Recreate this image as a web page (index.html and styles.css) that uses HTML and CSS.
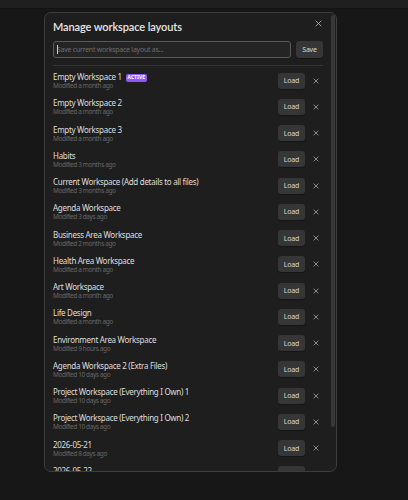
FILE: index.html
```html
<!DOCTYPE html>
<html lang="en">
<head>
  <meta charset="UTF-8" />
  <meta name="viewport" content="width=device-width, initial-scale=1.0"/>
  <title>Manage workspace layouts</title>
  <link rel="stylesheet" href="styles.css">
</head>
<body>
  <div class="titlebar"></div>

  <div class="modal">
    <div class="modal-body">
      <button class="modal-close" title="Close">
        <svg viewBox="0 0 10 10"><path d="M1 1L9 9M9 1L1 9" /></svg>
      </button>
      <h1>Manage workspace layouts</h1>

      <div class="save-row">
        <div class="input-wrap">
          <input type="text" class="layout-input" placeholder="Save current workspace layout as...">
          <span class="caret"></span>
        </div>
        <button class="btn">Save</button>
      </div>

      <div class="layout-list">
        <div class="layout-row">
          <div class="layout-info">
            <div class="layout-name">Empty Workspace 1 <span class="badge">ACTIVE</span></div>
            <div class="layout-date">Modified a month ago</div>
          </div>
          <button class="btn">Load</button>
          <button class="del"><svg viewBox="0 0 10 10"><path d="M1 1L9 9M9 1L1 9" /></svg></button>
        </div>
        <div class="layout-row">
          <div class="layout-info">
            <div class="layout-name">Empty Workspace 2</div>
            <div class="layout-date">Modified a month ago</div>
          </div>
          <button class="btn">Load</button>
          <button class="del"><svg viewBox="0 0 10 10"><path d="M1 1L9 9M9 1L1 9" /></svg></button>
        </div>
        <div class="layout-row">
          <div class="layout-info">
            <div class="layout-name">Empty Workspace 3</div>
            <div class="layout-date">Modified a month ago</div>
          </div>
          <button class="btn">Load</button>
          <button class="del"><svg viewBox="0 0 10 10"><path d="M1 1L9 9M9 1L1 9" /></svg></button>
        </div>
        <div class="layout-row">
          <div class="layout-info">
            <div class="layout-name">Habits</div>
            <div class="layout-date">Modified 3 months ago</div>
          </div>
          <button class="btn">Load</button>
          <button class="del"><svg viewBox="0 0 10 10"><path d="M1 1L9 9M9 1L1 9" /></svg></button>
        </div>
        <div class="layout-row">
          <div class="layout-info">
            <div class="layout-name">Current Workspace (Add details to all files)</div>
            <div class="layout-date">Modified 3 months ago</div>
          </div>
          <button class="btn">Load</button>
          <button class="del"><svg viewBox="0 0 10 10"><path d="M1 1L9 9M9 1L1 9" /></svg></button>
        </div>
        <div class="layout-row">
          <div class="layout-info">
            <div class="layout-name">Agenda Workspace</div>
            <div class="layout-date">Modified 3 days ago</div>
          </div>
          <button class="btn">Load</button>
          <button class="del"><svg viewBox="0 0 10 10"><path d="M1 1L9 9M9 1L1 9" /></svg></button>
        </div>
        <div class="layout-row">
          <div class="layout-info">
            <div class="layout-name">Business Area Workspace</div>
            <div class="layout-date">Modified 2 months ago</div>
          </div>
          <button class="btn">Load</button>
          <button class="del"><svg viewBox="0 0 10 10"><path d="M1 1L9 9M9 1L1 9" /></svg></button>
        </div>
        <div class="layout-row">
          <div class="layout-info">
            <div class="layout-name">Health Area Workspace</div>
            <div class="layout-date">Modified a month ago</div>
          </div>
          <button class="btn">Load</button>
          <button class="del"><svg viewBox="0 0 10 10"><path d="M1 1L9 9M9 1L1 9" /></svg></button>
        </div>
        <div class="layout-row">
          <div class="layout-info">
            <div class="layout-name">Art Workspace</div>
            <div class="layout-date">Modified a month ago</div>
          </div>
          <button class="btn">Load</button>
          <button class="del"><svg viewBox="0 0 10 10"><path d="M1 1L9 9M9 1L1 9" /></svg></button>
        </div>
        <div class="layout-row">
          <div class="layout-info">
            <div class="layout-name">Life Design</div>
            <div class="layout-date">Modified a month ago</div>
          </div>
          <button class="btn">Load</button>
          <button class="del"><svg viewBox="0 0 10 10"><path d="M1 1L9 9M9 1L1 9" /></svg></button>
        </div>
        <div class="layout-row">
          <div class="layout-info">
            <div class="layout-name">Environment Area Workspace</div>
            <div class="layout-date">Modified 9 hours ago</div>
          </div>
          <button class="btn">Load</button>
          <button class="del"><svg viewBox="0 0 10 10"><path d="M1 1L9 9M9 1L1 9" /></svg></button>
        </div>
        <div class="layout-row">
          <div class="layout-info">
            <div class="layout-name">Agenda Workspace 2 (Extra Files)</div>
            <div class="layout-date">Modified 10 days ago</div>
          </div>
          <button class="btn">Load</button>
          <button class="del"><svg viewBox="0 0 10 10"><path d="M1 1L9 9M9 1L1 9" /></svg></button>
        </div>
        <div class="layout-row">
          <div class="layout-info">
            <div class="layout-name">Project Workspace (Everything I Own) 1</div>
            <div class="layout-date">Modified 10 days ago</div>
          </div>
          <button class="btn">Load</button>
          <button class="del"><svg viewBox="0 0 10 10"><path d="M1 1L9 9M9 1L1 9" /></svg></button>
        </div>
        <div class="layout-row">
          <div class="layout-info">
            <div class="layout-name">Project Workspace (Everything I Own) 2</div>
            <div class="layout-date">Modified 10 days ago</div>
          </div>
          <button class="btn">Load</button>
          <button class="del"><svg viewBox="0 0 10 10"><path d="M1 1L9 9M9 1L1 9" /></svg></button>
        </div>
        <div class="layout-row">
          <div class="layout-info">
            <div class="layout-name">2026-05-21</div>
            <div class="layout-date">Modified 8 days ago</div>
          </div>
          <button class="btn">Load</button>
          <button class="del"><svg viewBox="0 0 10 10"><path d="M1 1L9 9M9 1L1 9" /></svg></button>
        </div>
        <div class="layout-row">
          <div class="layout-info">
            <div class="layout-name">2026-05-22</div>
            <div class="layout-date">Modified 7 days ago</div>
          </div>
          <button class="btn">Load</button>
          <button class="del"><svg viewBox="0 0 10 10"><path d="M1 1L9 9M9 1L1 9" /></svg></button>
        </div>
      </div>
    </div>
    <!-- scroll thumb, drawn since the body list overflows the modal -->
    <div class="scroll-thumb"></div>
  </div>
</body>
</html>
```

FILE: styles.css
```css
body {
  margin: 0;
  background: #171717;
  color: #dadada;
  font-family: 'Noto Sans', 'Open Sans', sans-serif;
  height: 500px;
  overflow: hidden;
}

.titlebar {
  height: 8px;
  background: #1f1f1f;
  border-bottom: 1px solid #141414;
}

.modal {
  position: relative;
  margin: 3px 0 0 44px;
  width: 291px;
  height: 458px;
  background: #1e1e1e;
  border: 1px solid #3e3e3e;
  border-radius: 7px;
  overflow: hidden;
}

.modal-body {
  position: relative;
  padding: 0 13px 0 8px;
}

.scroll-thumb {
  position: absolute;
  top: 2px;
  right: 1px;
  width: 4px;
  height: 412px;
  background: #383838;
  border-radius: 3px;
}

.modal-close {
  position: absolute;
  top: 4px;
  right: 12px;
  width: 12px;
  height: 12px;
  padding: 0;
  border: none;
  background: none;
  display: flex;
  align-items: center;
  justify-content: center;
}
.modal-close svg { width: 7px; height: 7px; }
.modal-close svg path, .del svg path {
  stroke: #b5b5b5;
  stroke-width: 1.2;
  fill: none;
}

h1 {
  margin: 0;
  padding-top: 6px;
  font-family: Lato, 'Noto Sans', sans-serif;
  font-size: 11px;
  line-height: 16px;
  font-weight: 600;
  letter-spacing: -0.1px;
  color: #e6e6e6;
}

.save-row {
  display: flex;
  gap: 5px;
  margin-top: 6px;
  padding-bottom: 7px;
  border-bottom: 1px solid #333;
}

.input-wrap {
  flex: 1;
  position: relative;
  display: flex;
}

.layout-input {
  flex: 1;
  height: 17px;
  box-sizing: border-box;
  background: #242424;
  border: 1.5px solid #595959;
  border-radius: 3px;
  color: #ddd;
  font-family: inherit;
  font-size: 7px;
  letter-spacing: -0.25px;
  padding: 0 3px;
  outline: none;
}
.layout-input::placeholder { color: #6c6c6c; }

.caret {
  position: absolute;
  left: 4px;
  top: 4px;
  width: 1px;
  height: 9px;
  background: #cfcfcf;
}

.btn {
  background: #363636;
  color: #d6d6d6;
  border: none;
  border-radius: 3px;
  font-family: inherit;
  font-size: 7px;
  letter-spacing: -0.2px;
  height: 17px;
  width: 27px;
  padding: 0;
  box-shadow: 0 1px 1px rgba(0,0,0,0.3);
}

.layout-list {
  padding-top: 1.5px;
}

.layout-row {
  display: flex;
  align-items: center;
  height: 26.25px;
}

.layout-info {
  flex: 1;
  min-width: 0;
}

.layout-name {
  font-size: 8px;
  line-height: 11px;
  letter-spacing: -0.3px;
  color: #dedede;
  white-space: nowrap;
}

.badge {
  display: inline-block;
  background: #8a5cf5;
  color: #fff;
  font-size: 5px;
  font-weight: 700;
  letter-spacing: 0;
  line-height: 7.5px;
  padding: 0 2px;
  border-radius: 2px;
  vertical-align: 1px;
  margin-left: 2px;
}

.layout-date {
  font-size: 6.5px;
  line-height: 8px;
  letter-spacing: -0.4px;
  color: #686868;
  white-space: nowrap;
}

.layout-row .btn { height: 16px; }

.del {
  width: 14px;
  height: 14px;
  margin-left: 4px;
  padding: 0;
  border: none;
  background: none;
  display: flex;
  align-items: center;
  justify-content: center;
}
.del svg { width: 6px; height: 6px; }
```
